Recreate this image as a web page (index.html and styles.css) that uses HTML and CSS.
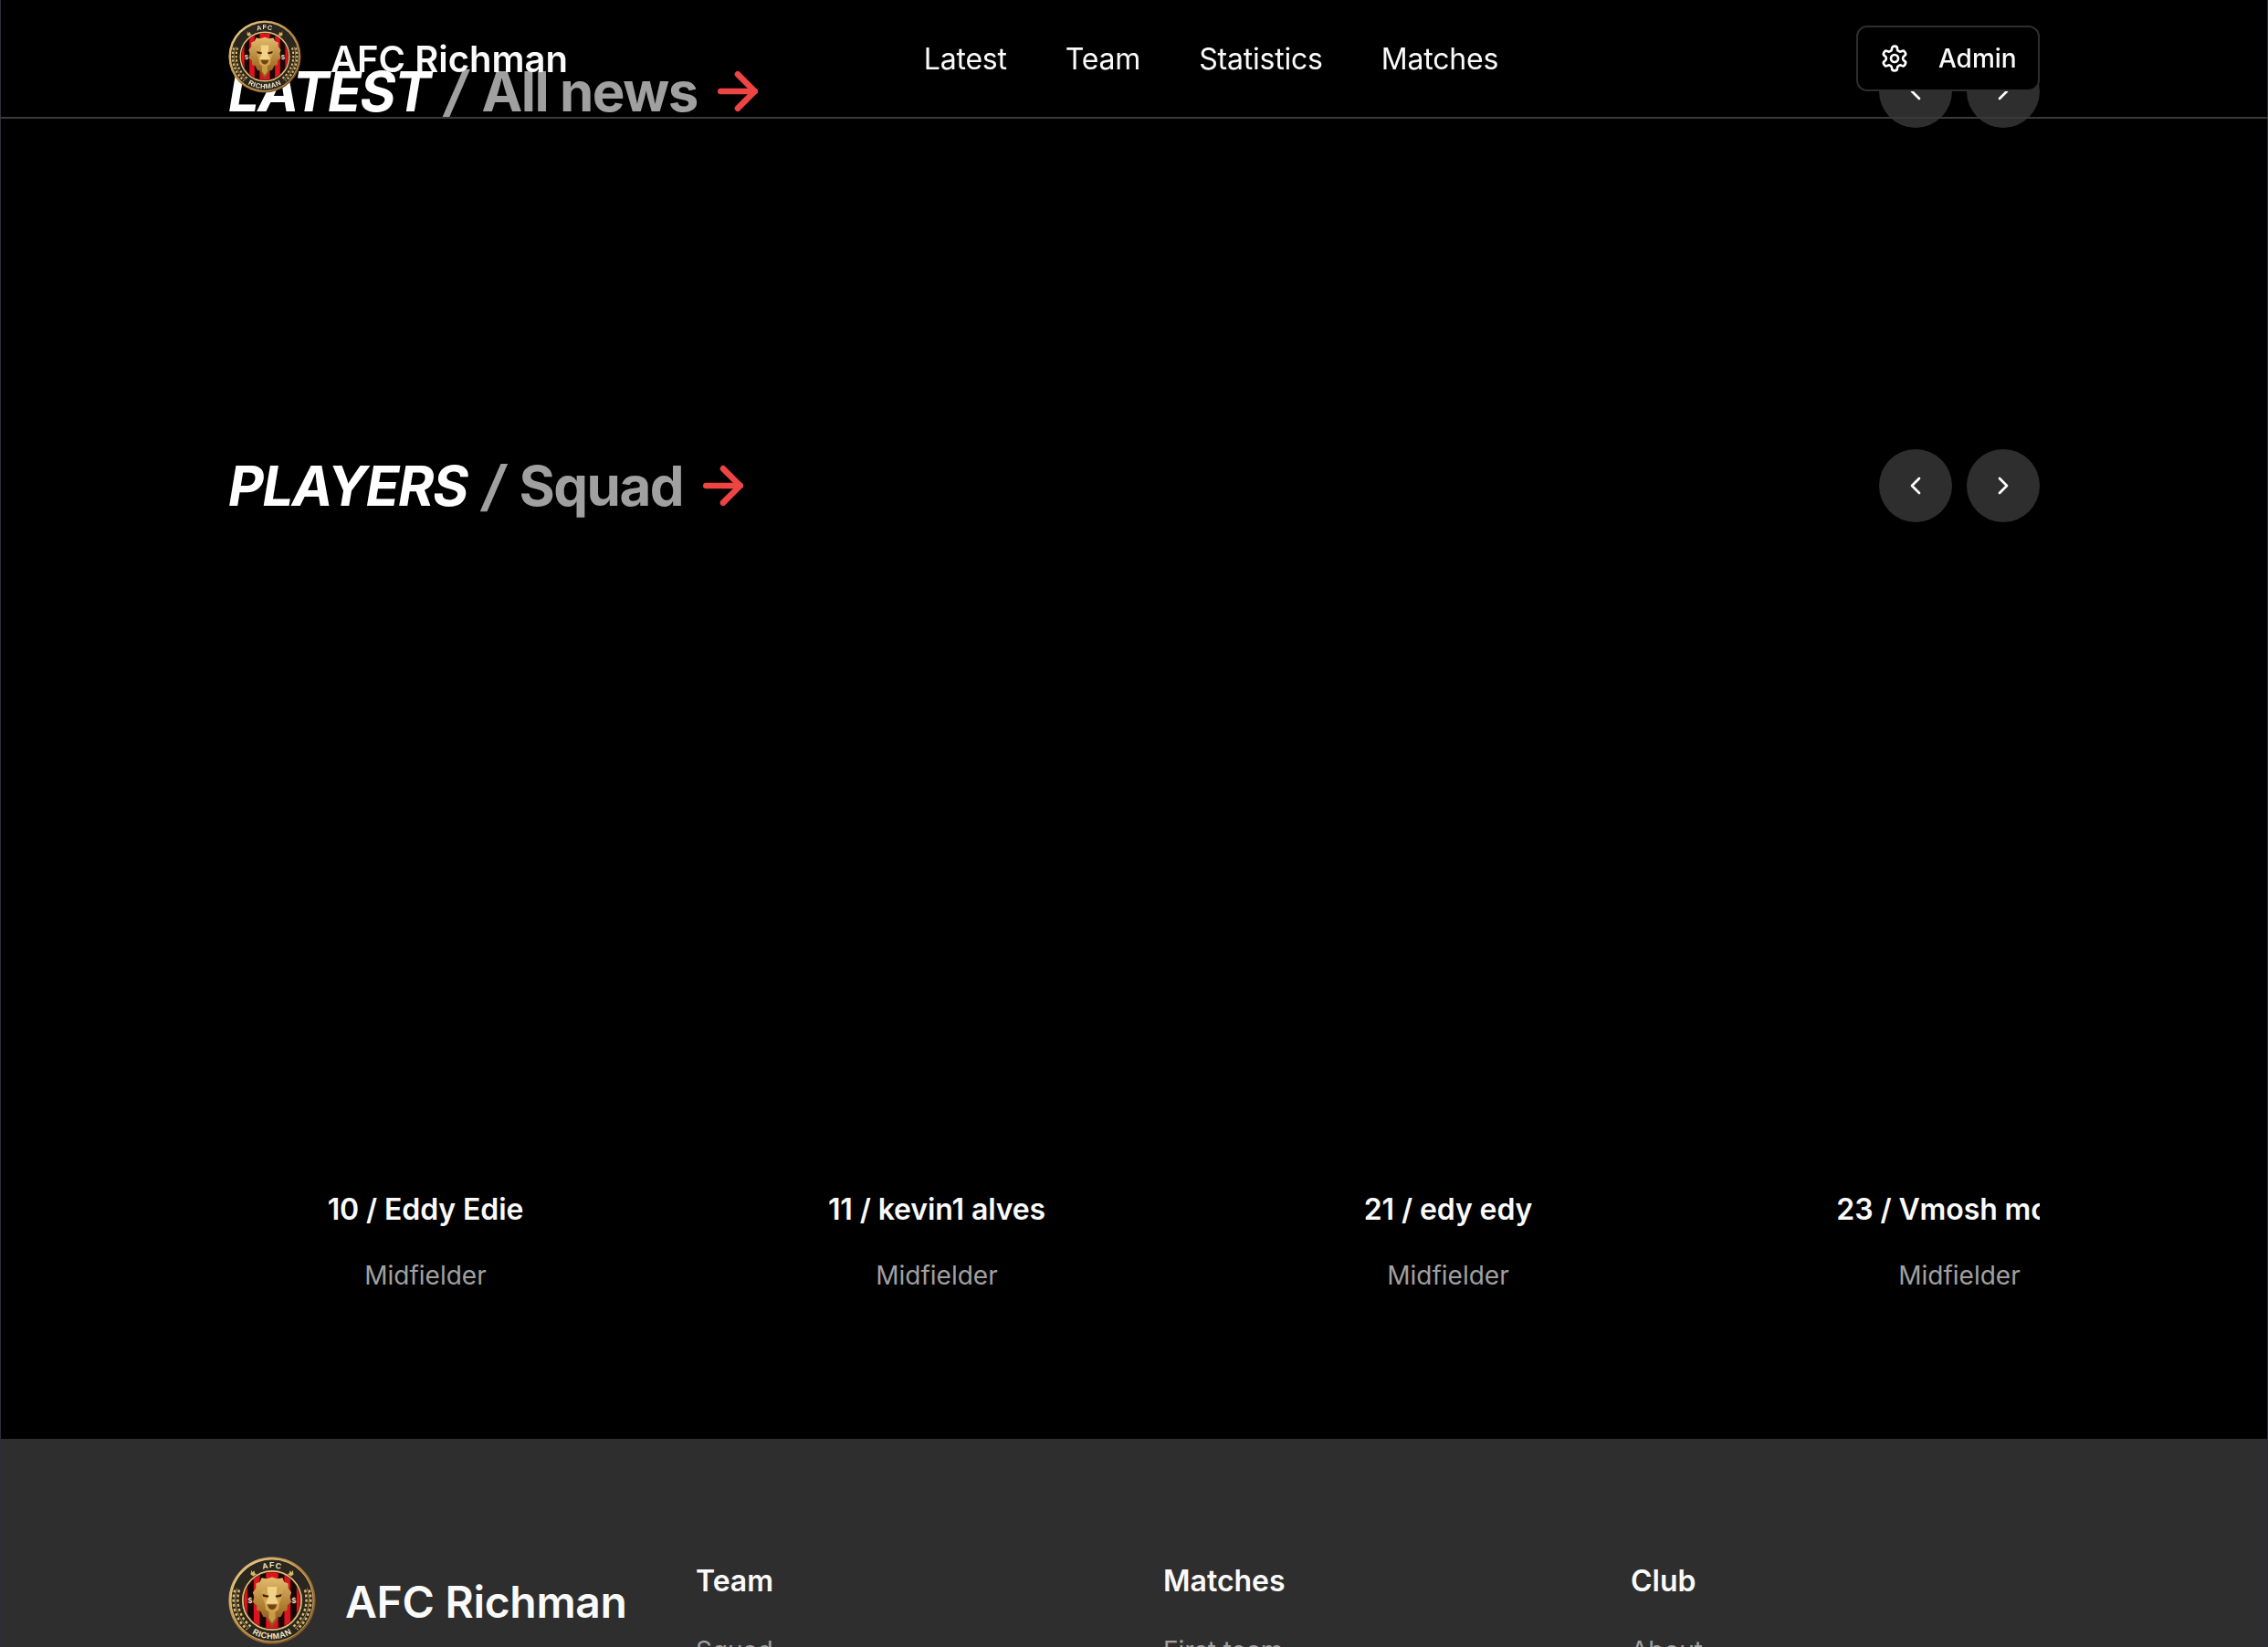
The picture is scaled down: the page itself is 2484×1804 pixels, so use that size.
FILE: index.html
```html
<!DOCTYPE html>
<html lang="en">
<head>
<meta charset="utf-8">
<title>AFC Richman</title>
<link rel="stylesheet" href="styles.css">
</head>
<body>
<svg class="defs" width="0" height="0" aria-hidden="true">
  <defs>
    <linearGradient id="gold" x1="0" y1="0" x2="1" y2="1">
      <stop offset="0" stop-color="#f4d58a"/><stop offset=".5" stop-color="#b5802f"/><stop offset="1" stop-color="#6b4216"/>
    </linearGradient>
    <linearGradient id="mane" x1="0" y1="0" x2="0" y2="1">
      <stop offset="0" stop-color="#e3bd6e"/><stop offset=".55" stop-color="#b07f33"/><stop offset="1" stop-color="#7f5219"/>
    </linearGradient>
    <clipPath id="shield"><circle cx="50" cy="50" r="32"/></clipPath>
    <path id="arcTop" d="M13 50a37 37 0 0 1 74 0"/>
    <path id="arcBottom" d="M6 50a44 44 0 0 0 88 0"/>
    <symbol id="crest" viewBox="0 0 100 100">
      <circle cx="50" cy="50" r="49.5" fill="url(#gold)"/>
      <circle cx="50" cy="50" r="46.5" fill="#2b261e"/>
      <circle cx="50" cy="50" r="47" fill="none" stroke="#e9dcc0" stroke-width=".6"/>
      <circle cx="50" cy="50" r="33.5" fill="none" stroke="#e2c27a" stroke-width="1.8"/>
      <g clip-path="url(#shield)">
        <rect x="15" y="15" width="70" height="70" fill="#e0121c"/>
        <rect x="22" y="15" width="7" height="70" fill="#170808"/>
        <rect x="36" y="15" width="7" height="70" fill="#170808"/>
        <rect x="57" y="15" width="7" height="70" fill="#170808"/>
        <rect x="71" y="15" width="7" height="70" fill="#170808"/>
      </g>
      <g class="crest-lion">
        <path d="M50 21l7 2 6-1 2 5 5 2 0 6 4 5-2 6 2 6-5 4 0 6-5 2-3 6-4 1-7 13-7-13-4-1-3-6-5-2 0-6-5-4 2-6-2-6 4-5 0-6 5-2 2-5 6 1z" fill="url(#mane)"/>
        <path d="M37 36l13-4 13 4-1 10-3 8-1 7-8 6-8-6-1-7-3-8z" fill="#d3a44f"/>
        <path d="M44 33h12l-1 14 3 7h-16l3-7z" fill="#f0d389"/>
        <path d="M44 55h12l-2 5-4 2-4-2z" fill="#6e4414"/>
        <path d="M38 42l8 2-1 2.4-6-1zM62 42l-8 2 1 2.4 6-1z" fill="#3f240a"/>
        <path d="M46 62l4 3 4-3 0 10-4 6-4-6z" fill="#c99a45"/>
      </g>
      <g fill="none" stroke="#d9b767" stroke-linecap="butt">
        <path d="M10 36A41.5 41.5 0 0 0 24 82" stroke-width=".7"/>
        <path d="M90 36A41.5 41.5 0 0 1 76 82" stroke-width=".7"/>
        <path d="M7.5 38A43.5 43.5 0 0 0 21.5 83" stroke-width="2.6" stroke-dasharray="3 2.4"/>
        <path d="M92.5 38A43.5 43.5 0 0 1 78.5 83" stroke-width="2.6" stroke-dasharray="3 2.4"/>
        <path d="M12.5 38A39 39 0 0 0 26 80" stroke-width="2.6" stroke-dasharray="3 2.4"/>
        <path d="M87.5 38A39 39 0 0 1 74 80" stroke-width="2.6" stroke-dasharray="3 2.4"/>
      </g>
      <g fill="#d9b767">
        <path d="M26 15l1.5 3 2-2.200 1 3.500 2 .500-4 2.500-3-2 .500-2.800z"/>
        <path d="M74 15l-1.500 3-2-2.200-1 3.500-2 .500 4 2.500 3-2-.500-2.800z"/>
      </g>
      <text class="crest-text crest-dollar" x="25" y="53.500">$</text>
      <text class="crest-text crest-dollar" x="75" y="53.500">$</text>
      <text class="crest-text crest-top"><textPath href="#arcTop" startOffset="50%">AFC</textPath></text>
      <text class="crest-text crest-bottom"><textPath href="#arcBottom" startOffset="50%">RICHMAN</textPath></text>
    </symbol>
    <symbol id="chev-l" viewBox="0 0 24 24"><path d="m15 18-6-6 6-6"/></symbol>
    <symbol id="chev-r" viewBox="0 0 24 24"><path d="m9 18 6-6-6-6"/></symbol>
    <symbol id="arrow" viewBox="0 0 24 24"><path d="M5 12h14"/><path d="m12 5 7 7-7 7"/></symbol>
  </defs>
</svg>

<header class="site-header">
  <div class="header-inner">
    <a class="brand">
      <svg class="brand-logo"><use href="#crest"/></svg>
      <span class="brand-name">AFC Richman</span>
    </a>
    <nav class="main-nav">
      <a>Latest</a>
      <a>Team</a>
      <a>Statistics</a>
      <a>Matches</a>
    </nav>
    <button class="admin-btn" type="button">
      <svg class="gear" viewBox="0 0 24 24"><path d="M12.22 2h-.44a2 2 0 0 0-2 2v.18a2 2 0 0 1-1 1.73l-.43.25a2 2 0 0 1-2 0l-.15-.08a2 2 0 0 0-2.73.73l-.22.38a2 2 0 0 0 .73 2.73l.15.1a2 2 0 0 1 1 1.72v.51a2 2 0 0 1-1 1.74l-.15.09a2 2 0 0 0-.73 2.73l.22.38a2 2 0 0 0 2.73.73l.15-.08a2 2 0 0 1 2 0l.43.25a2 2 0 0 1 1 1.73V20a2 2 0 0 0 2 2h.44a2 2 0 0 0 2-2v-.18a2 2 0 0 1 1-1.73l.43-.25a2 2 0 0 1 2 0l.15.08a2 2 0 0 0 2.73-.73l.22-.39a2 2 0 0 0-.73-2.73l-.15-.08a2 2 0 0 1-1-1.74v-.5a2 2 0 0 1 1-1.74l.15-.09a2 2 0 0 0 .73-2.73l-.22-.38a2 2 0 0 0-2.73-.73l-.15.08a2 2 0 0 1-2 0l-.43-.25a2 2 0 0 1-1-1.73V4a2 2 0 0 0-2-2z"/><circle cx="12" cy="12" r="3"/></svg>
      <span>Admin</span>
    </button>
  </div>
</header>

<main class="content">
  <section class="section section-latest">
    <div class="section-head">
      <h2 class="section-title"><em>LATEST</em><span class="title-slash">/</span><span>All news</span><svg class="title-arrow"><use href="#arrow"/></svg></h2>
      <div class="pager">
        <button class="pager-btn" type="button"><svg><use href="#chev-l"/></svg></button>
        <button class="pager-btn" type="button"><svg><use href="#chev-r"/></svg></button>
      </div>
    </div>
  </section>

  <section class="section section-players">
    <div class="section-head">
      <h2 class="section-title"><em>PLAYERS</em><span class="title-slash">/</span><span>Squad</span><svg class="title-arrow"><use href="#arrow"/></svg></h2>
      <div class="pager">
        <button class="pager-btn" type="button"><svg><use href="#chev-l"/></svg></button>
        <button class="pager-btn" type="button"><svg><use href="#chev-r"/></svg></button>
      </div>
    </div>
    <div class="players">
      <article class="player"><div class="player-photo"></div><h3>10 / Eddy Edie</h3><p>Midfielder</p></article>
      <article class="player"><div class="player-photo"></div><h3>11 / kevin1 alves</h3><p>Midfielder</p></article>
      <article class="player"><div class="player-photo"></div><h3>21 / edy edy</h3><p>Midfielder</p></article>
      <article class="player"><div class="player-photo"></div><h3>23 / Vmosh mosh</h3><p>Midfielder</p></article>
    </div>
  </section>
</main>

<footer class="site-footer">
  <div class="footer-inner">
    <div class="footer-brand">
      <svg class="footer-logo"><use href="#crest"/></svg>
      <span class="footer-name">AFC Richman</span>
    </div>
    <div class="footer-col"><h4>Team</h4><a>Squad</a></div>
    <div class="footer-col"><h4>Matches</h4><a>First team</a></div>
    <div class="footer-col"><h4>Club</h4><a>About</a></div>
  </div>
</footer>
</body>
</html>
```
FILE: styles.css
```css
* { box-sizing: border-box; }
html, body { margin: 0; padding: 0; }
html { background: #000; }
body {
  height: 1804px;
  overflow: hidden;
  background: #000;
  color: #fafafa;
  font-family: Inter, "Liberation Sans", sans-serif;
  border-left: 1px solid #2e2e38;
  border-right: 1px solid #2e2e38;
}
.defs { position: absolute; }
button { font: inherit; color: inherit; }
h2, h3, h4, p { margin: 0; }

.site-header {
  position: fixed;
  top: 0;
  left: 0;
  right: 0;
  z-index: 10;
  height: 130px;
  border-bottom: 2px solid #3a3a3a;
}
.header-inner {
  width: 1984px;
  height: 128px;
  margin: 0 auto;
  display: flex;
  align-items: center;
  justify-content: space-between;
}
.brand { display: flex; align-items: center; gap: 32px; }
.brand-logo { width: 80px; height: 80px; margin-top: -4px; }
.brand-name { font-size: 40px; font-weight: 600; line-height: 48px; padding-top: 2px; }
.main-nav { display: flex; gap: 64px; font-size: 32px; line-height: 48px; letter-spacing: -0.2px; padding-top: 2px; padding-right: 2px; }
.admin-btn {
  display: flex;
  align-items: center;
  gap: 32px;
  width: 201px;
  height: 72px;
  padding: 0 24px;
  background: #000;
  border: 2px solid #2e2e2e;
  border-radius: 12px;
  font-size: 28px;
  font-weight: 500;
}
.gear { width: 32px; height: 32px; flex: none; fill: none; stroke: #fff; stroke-width: 2; stroke-linecap: round; stroke-linejoin: round; }

.content { width: 1984px; margin: 0 auto; padding-top: 60px; height: 1576px; }
.section-head { display: flex; align-items: center; justify-content: space-between; height: 80px; }
.section-players { margin-top: 352px; }
.section-title {
  display: flex;
  align-items: center;
  gap: 12px;
  font-size: 60px;
  font-weight: 700;
  line-height: 80px;
  letter-spacing: -1.5px;
  white-space: pre;
}
.section-title em { font-style: italic; color: #fff; margin-right: 5px; }
.section-title span { color: #a0a0a0; }
.section-title .title-slash { font-style: italic; margin-right: 6px; }
.title-arrow {
  width: 64px;
  height: 64px;
  fill: none;
  stroke: #ef4444;
  stroke-width: 2.5;
  stroke-linecap: round;
  stroke-linejoin: round;
}
.pager { display: flex; gap: 16px; }
.pager-btn {
  width: 80px;
  height: 80px;
  padding: 0;
  display: flex;
  align-items: center;
  justify-content: center;
  border: 0;
  border-radius: 50%;
  background: #2e2e2e;
}
.pager-btn svg { width: 32px; height: 32px; fill: none; stroke: #fff; stroke-width: 2; stroke-linecap: round; stroke-linejoin: round; }

.players { display: flex; gap: 128px; overflow: hidden; margin-top: 81px; }
.player { flex: 0 0 432px; text-align: center; white-space: nowrap; }
.player-photo { height: 648px; }
.player h3 { font-size: 32px; font-weight: 600; line-height: 48px; letter-spacing: -0.1px; }
.player p { margin-top: 24px; font-size: 28px; line-height: 48px; color: #a0a0a0; }

.site-footer { background: #2e2e2e; height: 228px; }
.footer-inner {
  width: 1984px;
  margin: 0 auto;
  padding-top: 129px;
  display: grid;
  grid-template-columns: repeat(4, 464px);
  gap: 48px;
}
.footer-brand { display: flex; align-items: center; gap: 32px; align-self: start; }
.footer-logo { width: 96px; height: 96px; flex: none; }
.footer-name { font-size: 48px; font-weight: 600; line-height: 64px; letter-spacing: -0.3px; white-space: nowrap; padding-top: 3px; }
.footer-col h4 { font-size: 32px; font-weight: 600; line-height: 54px; }
.footer-col a { display: block; margin-top: 29px; font-size: 28px; line-height: 40px; color: #a0a0a0; }

.crest-lion { transform: translate(4px, 4px) scale(.92); }
.crest-text { font-family: "Liberation Sans", sans-serif; font-weight: 700; fill: #f2e6c4; text-anchor: middle; }
.crest-top { font-size: 9px; letter-spacing: 1px; }
.crest-bottom { font-size: 9.500px; letter-spacing: .5px; }
.crest-dollar { font-size: 9px; }
```
